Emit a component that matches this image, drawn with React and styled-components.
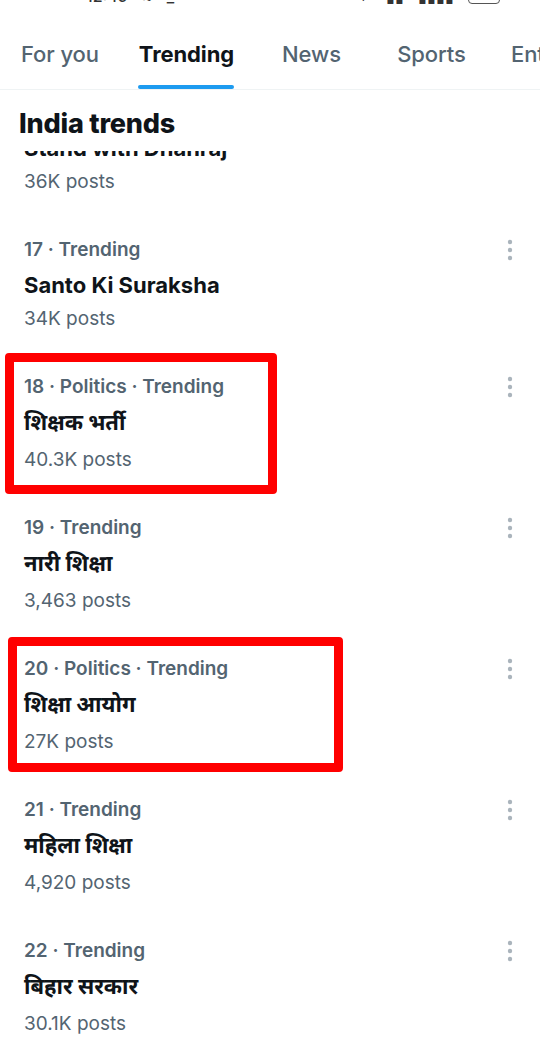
import React from "react";
import styled, { createGlobalStyle } from "styled-components";

const GlobalStyle = createGlobalStyle`
  html, body {
    margin: 0;
    padding: 0;
    background: #fff;
  }
  body {
    font-family: Inter, "Noto Sans", "Noto Sans Devanagari", "Lohit Devanagari", sans-serif;
    color: #0f1419;
    -webkit-font-smoothing: antialiased;
  }
`;

const Page = styled.div`
  width: 540px;
  height: 1054px;
  overflow: hidden;
  background: #fff;
`;

const StatusBar = styled.div`
  height: 8px;
  overflow: hidden;
  display: flex;
  align-items: flex-end;
  padding: 0 40px 0 86px;
`;

const StatusRow = styled.div`
  display: flex;
  align-items: center;
  width: 100%;
  margin-top: -22px;
  height: 24px;
  font-size: 16px;
  font-weight: 500;
  color: #333;
  gap: 14px;
`;

const StatusSpacer = styled.div`
  flex: 1;
`;

const StatusSmall = styled.span`
  font-size: 9px;
  font-weight: 700;
`;

const Battery = styled.span`
  width: 30px;
  height: 14px;
  border: 1.5px solid #555;
  border-radius: 4px;
`;

const TabBar = styled.nav`
  display: flex;
  height: 81px;
  border-bottom: 1px solid #eff3f4;
  white-space: nowrap;
  overflow: hidden;
`;

const Tab = styled.div`
  flex: 0 0 ${(p) => p.$w}px;
  display: flex;
  justify-content: ${(p) => (p.$start ? "flex-start" : "center")};
  padding-top: 34px;
  padding-left: ${(p) => (p.$start ? "18px" : "0")};
  box-sizing: border-box;
`;

const TabLabel = styled.span`
  position: relative;
  height: 24px;
  line-height: 24px;
  font-size: 22px;
  letter-spacing: -0.1px;
  font-weight: ${(p) => (p.$active ? 700 : 500)};
  color: ${(p) => (p.$active ? "#0f1419" : "#536471")};

  &::after {
    content: "";
    display: ${(p) => (p.$active ? "block" : "none")};
    position: absolute;
    left: -1px;
    right: 0;
    top: calc(100% + 19px);
    height: 4px;
    border-radius: 2px;
    background: #1d9bf0;
  }
`;

const Header = styled.h2`
  margin: 0;
  padding: 18px 19px 11px;
  font-size: 27px;
  line-height: 32px;
  font-weight: 800;
  letter-spacing: -0.2px;
  color: #0f1419;
`;

const Clipped = styled.div`
  height: 66px;
  overflow: hidden;
  display: flex;
  flex-direction: column;
  justify-content: flex-end;
`;

const Item = styled.article`
  position: relative;
  display: flex;
  padding: 20px 20px 23px 24px;
`;

const Body = styled.div`
  flex: 1;
  display: flex;
  flex-direction: column;
`;

const Meta = styled.div`
  height: 26px;
  line-height: 26px;
  font-size: 19px;
  font-weight: 600;
  color: #536471;
`;

const Title = styled.div`
  height: ${(p) => (p.$tall ? 48 : 44)}px;
  line-height: 44px;
  font-size: 22px;
  font-weight: 700;
  color: #0f1419;
`;

const Posts = styled.div`
  height: 24px;
  line-height: 24px;
  font-size: 19px;
  font-weight: 400;
  color: #536471;
`;

const More = styled.div`
  width: 20px;
  height: 26px;
  display: flex;
  align-items: center;
  justify-content: center;
`;

const Highlight = styled.div`
  position: absolute;
  left: ${(p) => p.$x}px;
  top: ${(p) => p.$y}px;
  width: ${(p) => p.$w}px;
  height: ${(p) => p.$h}px;
  box-sizing: border-box;
  border: 9px solid #ff0000;
  border-radius: 4px;
  pointer-events: none;
`;

const tabs = [
  { label: "For you", w: 120 },
  { label: "Trending", w: 133, active: true },
  { label: "News", w: 117 },
  { label: "Sports", w: 123 },
  { label: "Entertainment", w: 200, start: true },
];

const trends = [
  { meta: "17 · Trending", title: "Santo Ki Suraksha", posts: "34K posts" },
  {
    meta: "18 · Politics · Trending",
    title: "शिक्षक भर्ती",
    posts: "40.3K posts",
    tall: true,
    box: { x: 5, y: -1, w: 272, h: 141 },
  },
  { meta: "19 · Trending", title: "नारी शिक्षा", posts: "3,463 posts", tall: true },
  {
    meta: "20 · Politics · Trending",
    title: "शिक्षा आयोग",
    posts: "27K posts",
    tall: true,
    box: { x: 8, y: 1, w: 335, h: 135 },
  },
  { meta: "21 · Trending", title: "महिला शिक्षा", posts: "4,920 posts", tall: true },
  { meta: "22 · Trending", title: "बिहार सरकार", posts: "30.1K posts", tall: true },
];

function Dots() {
  return (
    <svg width="6" height="22" viewBox="0 0 6 22">
      <circle cx="3" cy="3" r="2.2" fill="#aab4bc" />
      <circle cx="3" cy="11" r="2.2" fill="#aab4bc" />
      <circle cx="3" cy="19" r="2.2" fill="#aab4bc" />
    </svg>
  );
}

function Trend({ trend }) {
  return (
    <Item>
      <Body>
        <Meta>{trend.meta}</Meta>
        <Title $tall={trend.tall}>{trend.title}</Title>
        <Posts>{trend.posts}</Posts>
      </Body>
      <More>
        <Dots />
      </More>
      {trend.box && (
        <Highlight $x={trend.box.x} $y={trend.box.y} $w={trend.box.w} $h={trend.box.h} />
      )}
    </Item>
  );
}

export default function App() {
  return (
    <Page>
      <GlobalStyle />
      <StatusBar>
        <StatusRow>
          <span>12:49</span>
          <span>≈</span>
          <span>_</span>
          <StatusSpacer />
          <StatusSmall>KB/S</StatusSmall>
          <span>▮▮</span>
          <span>▮▮▮▮</span>
          <Battery />
        </StatusRow>
      </StatusBar>
      <TabBar>
        {tabs.map((t) => (
          <Tab key={t.label} $w={t.w} $start={t.start}>
            <TabLabel $active={t.active}>{t.label}</TabLabel>
          </Tab>
        ))}
      </TabBar>
      <Header>India trends</Header>
      <Clipped>
        <Item>
          <Body>
            <Title>Stand with Dhanraj</Title>
            <Posts>36K posts</Posts>
          </Body>
        </Item>
      </Clipped>
      {trends.map((t) => (
        <Trend key={t.meta} trend={t} />
      ))}
    </Page>
  );
}
